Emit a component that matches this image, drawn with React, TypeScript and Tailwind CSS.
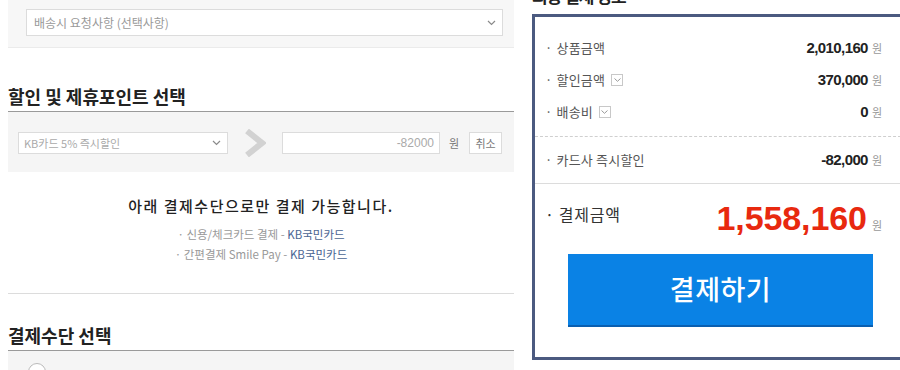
import React from "react";

const kr = "font-['Noto_Sans_CJK_KR','Noto_Sans',sans-serif]";
const num = "font-['Liberation_Sans',Arial,sans-serif]";

function SmallChevron({ className = "" }: { className?: string }) {
  return (
    <svg width="9" height="6" viewBox="0 0 9 6" className={className}>
      <polyline points="1,1 4.5,4.5 8,1" fill="none" stroke="#8a8a8a" strokeWidth="1.2" />
    </svg>
  );
}

function BoxChevron() {
  return (
    <span className="inline-flex h-[12px] w-[12px] items-center justify-center border border-[#c8c8c8] bg-white ml-[6px]">
      <svg width="7" height="4" viewBox="0 0 7 4">
        <polyline points="0.5,0.5 3.5,3.3 6.5,0.5" fill="none" stroke="#999" strokeWidth="1" />
      </svg>
    </span>
  );
}

function Row({ label, value, icon, h = "h-8" }: { label: string; value: string; icon?: boolean; h?: string }) {
  return (
    <div className={`flex items-center justify-between ${h}`}>
      <div className={`flex items-center text-[13px] text-[#555] tracking-[0.2px] ${kr}`}>
        <span className="mr-[4px]">·</span>
        <span>{label}</span>
        {icon && <BoxChevron />}
      </div>
      <div className="flex items-baseline">
        <span className={`${num} text-[15px] font-bold text-[#222] tracking-[-0.6px]`}>{value}</span>
        <span className={`${kr} text-[11px] text-[#999] ml-[4px]`}>원</span>
      </div>
    </div>
  );
}

export default function App() {
  return (
    <div className="w-[900px] h-[370px] overflow-hidden bg-white">
      <div className="flex pl-[8px] gap-[18px]">
        {/* Left column */}
        <div className="w-[506px] shrink-0">
          <div className="h-[48px] bg-[#f7f7f7] border-b border-[#ebebeb] pl-[18px] pr-[11px] pt-[9px]">
            <div className="h-[27px] bg-white border border-[#dcdcdc] flex items-center justify-between pl-[7px] pr-[6px]">
              <span className={`${kr} text-[12px] text-[#999]`}>배송시 요청사항 (선택사항)</span>
              <SmallChevron />
            </div>
          </div>

          <div className="h-[64px] flex items-end pb-[3px] border-b border-[#9a9a9a]">
            <h2 className={`${kr} text-[18px] leading-[24px] font-bold text-[#222]`}>할인 및 제휴포인트 선택</h2>
          </div>

          <div className="h-[60px] bg-[#f5f5f5] pt-[20px] pl-[10px] flex items-start">
            <div className="w-[210px] h-[22px] bg-white border border-[#dcdcdc] flex items-center justify-between pl-[5px] pr-[6px]">
              <span className={`${kr} text-[11px] text-[#aaa]`}>KB카드 5% 즉시할인</span>
              <SmallChevron />
            </div>
            <div className="w-[54px] h-[22px] flex items-center justify-center">
              <svg width="22" height="28" viewBox="0 0 22 28">
                <polyline points="3,2 18,14 3,26" fill="none" stroke="#d2d2d2" strokeWidth="6" />
              </svg>
            </div>
            <div className="w-[158px] h-[22px] bg-white border border-[#dcdcdc] flex items-center justify-end pr-[5px]">
              <span className={`${num} text-[12px] text-[#aaa]`}>-82000</span>
            </div>
            <span className={`${kr} text-[11px] text-[#777] ml-[9px] leading-[22px]`}>원</span>
            <div className={`ml-[10px] w-[33px] h-[22px] bg-white border border-[#dcdcdc] flex items-center justify-center ${kr} text-[11px] text-[#777]`}>
              취소
            </div>
          </div>

          <div className="pt-[22px] pb-[29px] border-b border-[#dcdcdc] flex flex-col items-center">
            <p className={`${kr} text-[15px] leading-[24px] text-[#222] font-medium tracking-[1.5px]`}>아래 결제수단으로만 결제 가능합니다.</p>
            <div className={`mt-[6px] ${kr} text-[11.5px] leading-[20px] text-[#999] flex flex-col items-center`}>
              <p>· 신용/체크카드 결제 - <span className="text-[#4a6593]">KB국민카드</span></p>
              <p>· 간편결제 Smile Pay - <span className="text-[#4a6593]">KB국민카드</span></p>
            </div>
          </div>

          <div className="h-[57px] flex items-end pb-[3px] border-b border-[#9a9a9a]">
            <h2 className={`${kr} text-[18px] leading-[24px] font-bold text-[#222]`}>결제수단 선택</h2>
          </div>
          <div className="h-[40px] bg-[#f5f5f5] pl-[20px] pt-[12px]">
            <div className="w-[18px] h-[18px] rounded-full border border-[#bbb] bg-white" />
          </div>
        </div>

        {/* Right column */}
        <div className="w-[377px] shrink-0">
          <h3 className={`${kr} -mt-[16px] h-[27px] text-[17px] leading-[24px] font-bold text-[#222] tracking-[-1px]`}>최종 결제 정보</h3>
          <div className="mt-[3px] border-[3px] border-[#4b5a80] h-[346px]">
            <div className="pt-[15px] pb-[8px] pl-[10px] pr-[24px] border-b border-dashed border-[#cfcfcf]">
              <Row label="상품금액" value="2,010,160" />
              <Row label="할인금액" value="370,000" icon />
              <Row label="배송비" value="0" icon />
            </div>
            <div className="pl-[10px] pr-[24px] border-b border-[#dcdcdc]">
              <Row label="카드사 즉시할인" value="-82,000" h="h-[46px]" />
            </div>
            <div className="pl-[10px] pr-[24px] pt-[14px]">
              <div className="flex items-start justify-between">
                <div className={`flex items-center text-[16px] text-[#333] tracking-[0.8px] ${kr} pt-[4px]`}>
                  <span className="mr-[4px]">·</span>
                  <span>결제금액</span>
                </div>
                <div className="flex items-baseline">
                  <span className={`${num} text-[34px] leading-[40px] font-bold text-[#e8290f] tracking-[-0.1px]`}>1,558,160</span>
                  <span className={`${kr} text-[11px] text-[#999] ml-[5px]`}>원</span>
                </div>
              </div>
            </div>
            <div className="pl-[33px] mt-[16px]">
              <div className={`w-[305px] h-[73px] bg-[#0a82e5] border-b-2 border-[#0a5fb0] flex items-center justify-center ${kr} text-[27px] font-medium text-white tracking-[0.5px]`}>
                결제하기
              </div>
            </div>
          </div>
        </div>
      </div>
    </div>
  );
}
